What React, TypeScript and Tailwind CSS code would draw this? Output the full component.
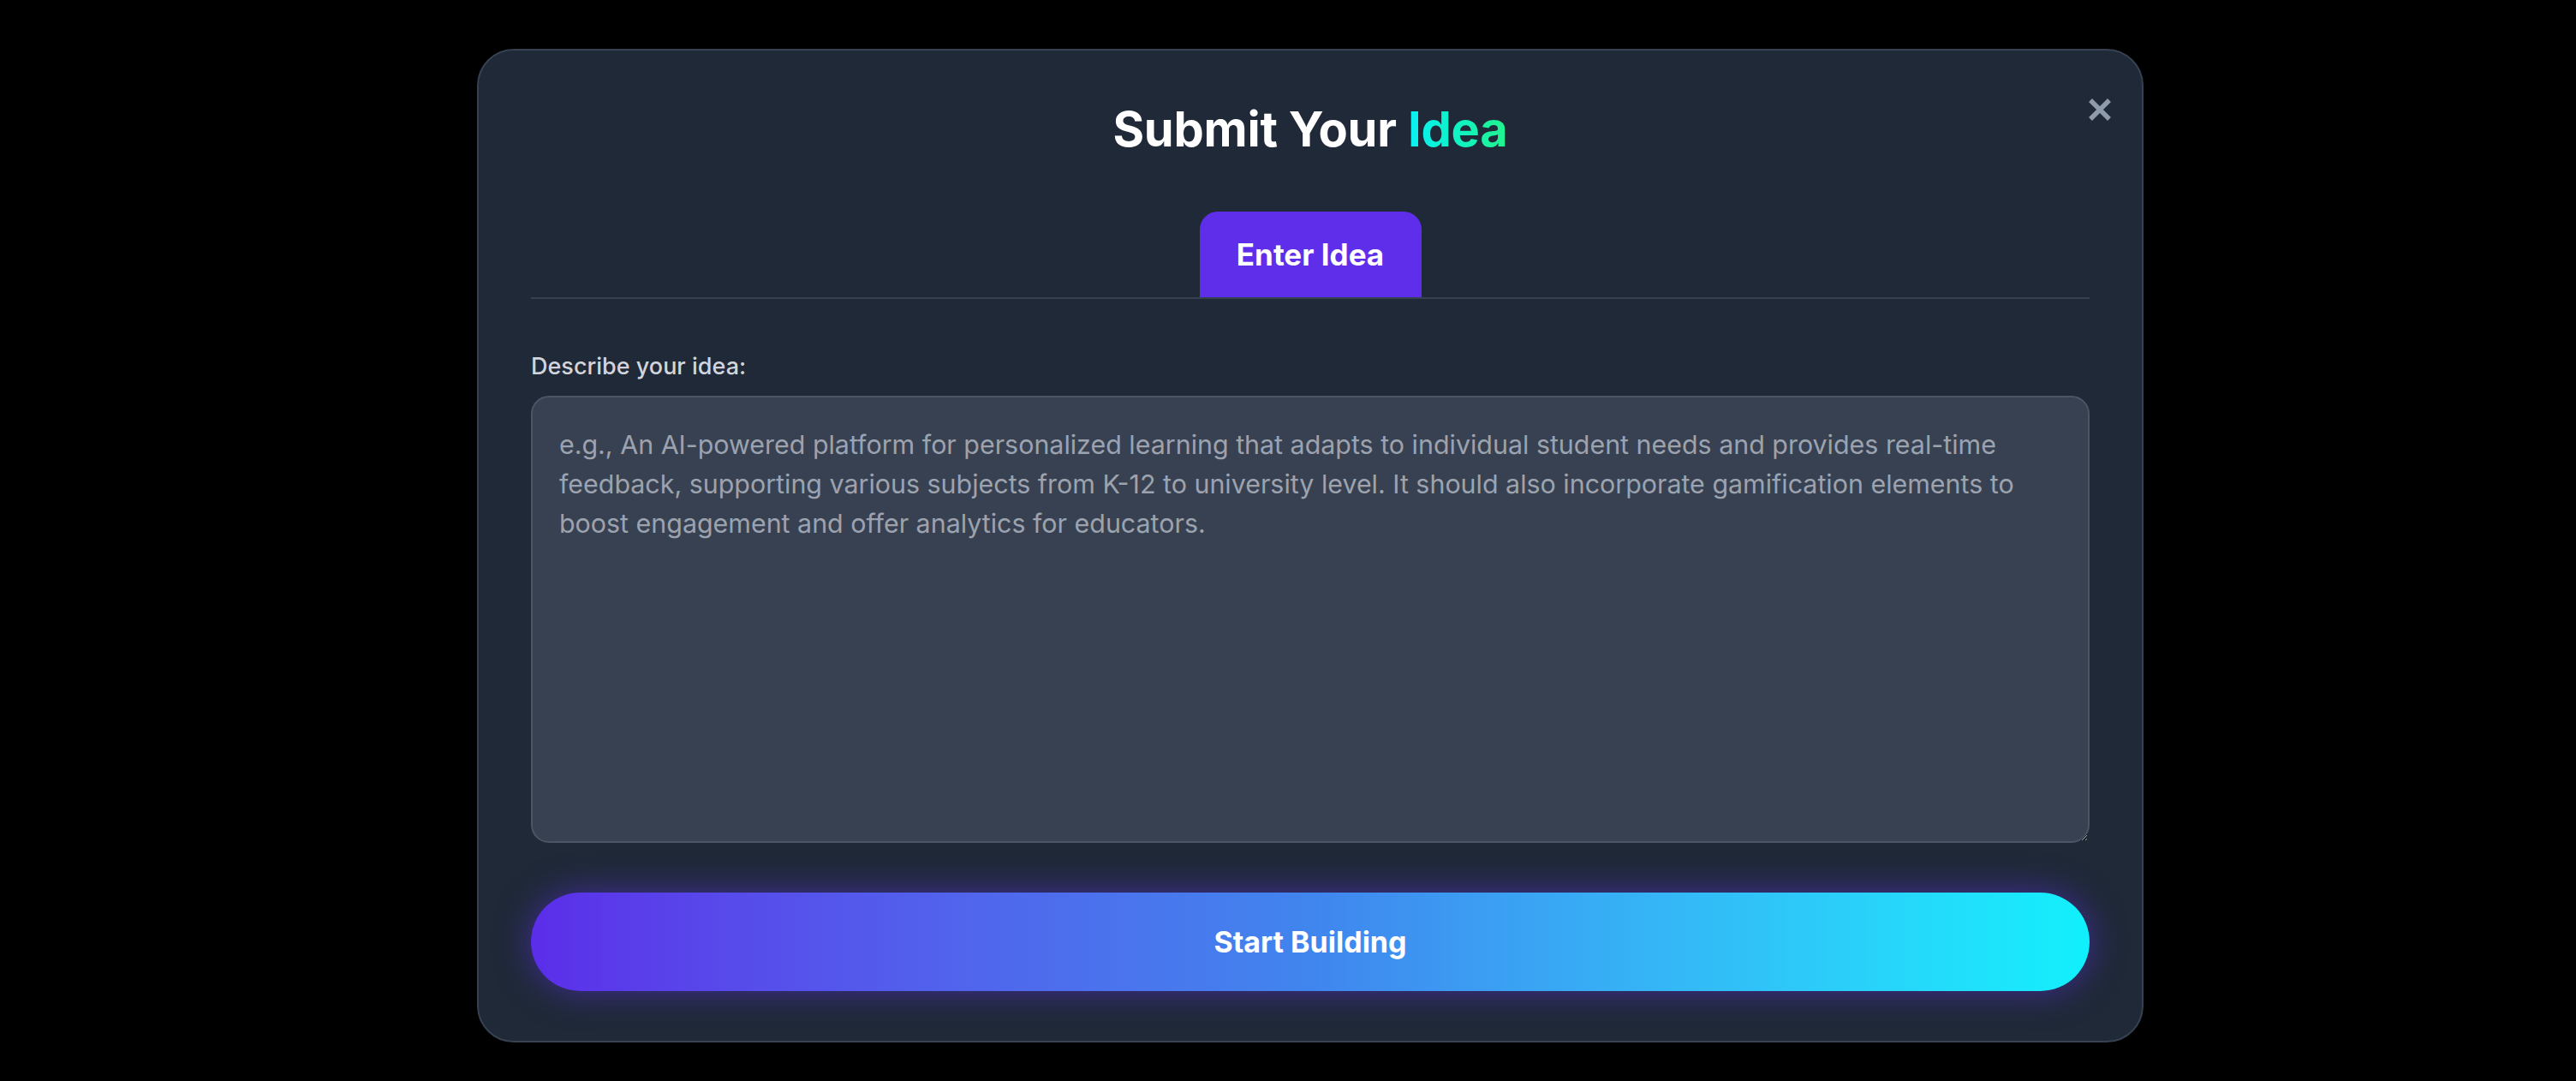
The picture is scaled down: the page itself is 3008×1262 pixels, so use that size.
import React from "react";

export default function App() {
  return (
    <div
      className="min-h-screen w-full bg-black flex items-start pl-[557px] pt-[57px]"
      style={{ fontFamily: "Inter, 'Noto Sans', sans-serif" }}
    >
      <div className="relative w-[1946px] rounded-[43px] border-2 border-[#364152] bg-[#1f2937] px-[61px] pt-[58px] pb-[58px] flex flex-col">
        <button className="absolute left-[1879px] top-[55px] w-[28px] h-[28px] flex items-center justify-center">
          <svg width="28" height="28" viewBox="0 0 28 28" fill="none">
            <path d="M3 3 L25 25 M25 3 L3 25" stroke="#8f9bab" strokeWidth="5.5" strokeLinecap="butt" />
          </svg>
        </button>

        <h1 className="text-center text-[56px] leading-[68px] font-bold text-white tracking-[-0.2px]">
          Submit Your{" "}
          <span className="bg-gradient-to-r from-[#0cf0f5] to-[#22f38a] bg-clip-text text-transparent">
            Idea
          </span>
        </h1>

        <div className="mt-[62px] flex justify-center border-b-2 border-[#364152]">
          <div className="w-[259px] h-[100px] rounded-t-[21px] bg-[#5f2eea] flex items-center justify-center text-[35px] font-bold text-white">
            Enter Idea
          </div>
        </div>

        <label className="mt-[60px] text-[27px] leading-[38px] font-medium text-[#d1d5db]">
          Describe your idea:
        </label>

        <textarea
          className="mt-[15px] h-[522px] w-full resize-y rounded-[21px] border-2 border-[#4b5563] bg-[#374151] px-[31px] py-[32px] text-[30.4px] leading-[46px] text-white placeholder:text-[#9ca3af] outline-none"
          placeholder="e.g., An AI-powered platform for personalized learning that adapts to individual student needs and provides real-time feedback, supporting various subjects from K-12 to university level. It should also incorporate gamification elements to boost engagement and offer analytics for educators."
        />

        <button className="mt-[58px] h-[115px] w-full rounded-full bg-gradient-to-r from-[#5b2de9] via-[#4085ee] to-[#0ff0fc] text-[34px] font-bold text-white shadow-[0_0_40px_rgba(95,50,235,0.55)]">
          Start Building
        </button>
      </div>
    </div>
  );
}
